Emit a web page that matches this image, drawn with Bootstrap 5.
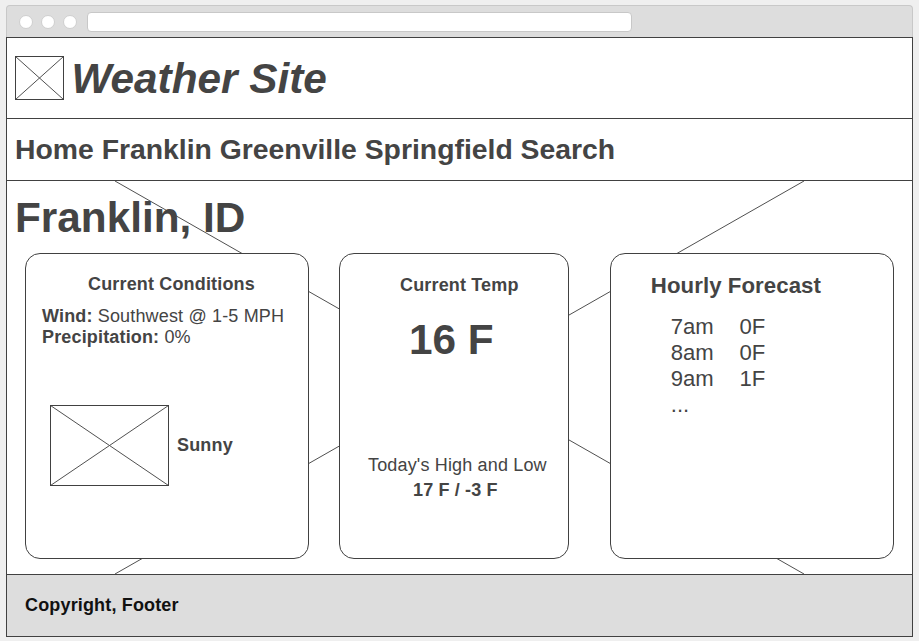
<!DOCTYPE html>
<html lang="en">
<head>
<meta charset="utf-8">
<meta name="viewport" content="width=device-width, initial-scale=1">
<title>Weather Site</title>
<link href="https://cdn.jsdelivr.net/npm/bootstrap@5.3.0/dist/css/bootstrap.min.css" rel="stylesheet">
<style>
  body { background: #efefef; color: #444; font-family: "Liberation Sans", Arial, sans-serif; height: 641px; overflow: hidden; padding: 5px 6px 4px; }
  .window { width: 907px; }
  .chrome { height: 32px; background: #ddd; border: 1px solid #c8c8c8; border-bottom: 0; border-radius: 4px 4px 0 0; padding-left: 12px; gap: 8px; }
  .dot { width: 14px; height: 14px; background: #fff; border: 1px solid #cfcfcf; }
  .address { width: 545px; height: 20px; background: #fff; border: 1px solid #c8c8c8; border-radius: 4px; margin-left: 2px; }
  .page { height: 600px; background: #fff; border: 1px solid #414141; }
  .site-head { height: 81px; border-bottom: 1px solid #414141; padding: 16px 8px 0; gap: 7.4px; }
  .logo { margin-top: 2px; }
  .site-nav { height: 62px; border-bottom: 1px solid #414141; padding: 13px 8px 0; font-size: 28.35px; line-height: 34px; }
  .site-nav a { color: inherit; }
  .content { height: 393px; }
  .title { font-size: 42.3px; line-height: 50px; }
  .place { padding: 12px 0 10px 8px; }
  .site-foot { height: 62px; background: #ddd; border-top: 1px solid #414141; color: #111; padding: 20px 18px 0; }
  .body-text { font-size: 18px; line-height: 21px; letter-spacing: .16px; }
  .panels { padding-left: 18px; }
  .panel { height: 306px; background: #fff; border: 1px solid #414141; border-radius: 15px; }
  .conditions { width: 284px; padding: 20px 0 0 16px; }
  .conditions h2 { padding-left: 46px; margin-bottom: 11px; }
  .temperature { width: 230px; margin-left: 30px; padding-top: 21px; }
  .temperature h2 { padding-left: 60px; margin-bottom: 19px; }
  .reading { padding-left: 69px; margin-bottom: 90px; letter-spacing: 0; }
  .high-low { padding-left: 28px; }
  .low-value { margin: 4px 4px 0 0; }
  .forecast { width: 284px; margin-left: 41px; padding: 19px 0 0 39.8px; font-size: 22.1px; line-height: 26px; }
  .forecast h2 { font-size: 22.22px; line-height: 26px; letter-spacing: .07px; margin-bottom: 15px; }
  .hours { display: grid; grid-template-columns: 68.6px auto; padding-left: 20px; }
  .sky { margin: 57px 0 0 8px; gap: 8px; }
  .backdrop { position: absolute; inset: 0; }
  svg { display: block; flex: none; fill: none; stroke: #414141; }
  svg .edge { shape-rendering: crispEdges; }
  svg .cross { stroke: #505050; }
</style>
</head>
<body>
<div class="window">
  <div class="chrome d-flex align-items-center">
    <span class="dot rounded-circle"></span>
    <span class="dot rounded-circle"></span>
    <span class="dot rounded-circle"></span>
    <span class="address"></span>
  </div>
  <div class="page">
    <header class="site-head d-flex">
      <svg class="logo" width="49" height="44"><path class="cross" d="M.5 .5l48 43M48.5 .5l-48 43"/><rect class="edge" x=".5" y=".5" width="48" height="43"/></svg>
      <h1 class="title fw-bold fst-italic mb-0">Weather Site</h1>
    </header>
    <nav class="site-nav fw-bold">
      <a class="text-decoration-none">Home</a>
      <a class="text-decoration-none">Franklin</a>
      <a class="text-decoration-none">Greenville</a>
      <a class="text-decoration-none">Springfield</a>
      <a class="text-decoration-none">Search</a>
    </nav>
    <main class="content position-relative">
      <svg class="backdrop" width="905" height="393"><path class="cross" d="M108 0l689 393M797 0L108 393"/></svg>
      <h1 class="title place fw-bold mb-0 position-relative">Franklin, ID</h1>
      <div class="panels d-flex position-relative">
        <section class="panel conditions body-text">
          <h2 class="body-text fw-bold">Current Conditions</h2>
          <div><b>Wind:</b> Southwest @ 1-5 MPH</div>
          <div><b>Precipitation:</b> 0%</div>
          <div class="sky d-flex align-items-center">
            <svg width="119" height="81"><path class="cross" d="M.5 .5l118 80M118.5 .5l-118 80"/><rect class="edge" x=".5" y=".5" width="118" height="80"/></svg>
            <b>Sunny</b>
          </div>
        </section>
        <section class="panel temperature body-text">
          <h2 class="body-text fw-bold">Current Temp</h2>
          <div class="title reading fw-bold">16 F</div>
          <div class="high-low d-inline-block text-center">Today's High and Low<b class="low-value d-block">17 F / -3 F</b></div>
        </section>
        <section class="panel forecast">
          <h2 class="fw-bold">Hourly Forecast</h2>
          <div class="hours">
            <span>7am</span><span>0F</span>
            <span>8am</span><span>0F</span>
            <span>9am</span><span>1F</span>
            <span>...</span>
          </div>
        </section>
      </div>
    </main>
    <footer class="site-foot body-text fw-bold">Copyright, Footer</footer>
  </div>
</div>
<script src="https://cdn.jsdelivr.net/npm/bootstrap@5.3.0/dist/js/bootstrap.bundle.min.js"></script>
</body>
</html>
